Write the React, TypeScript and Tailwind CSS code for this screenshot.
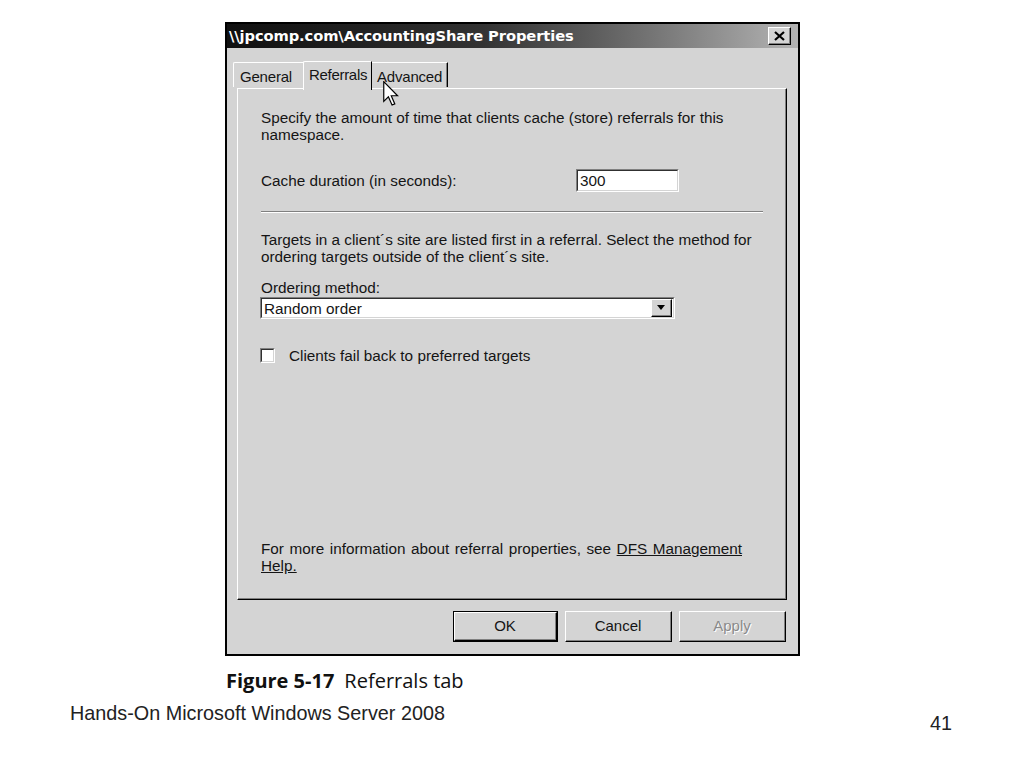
import React from "react";

function Raised({ className = "", children }: { className?: string; children?: React.ReactNode }) {
  return (
    <div className={"border-t border-l border-t-white border-l-white border-r border-b border-r-black border-b-black " + className}>
      <div className="w-full h-full border-r border-b border-r-[#808080] border-b-[#808080] flex items-center justify-center">
        {children}
      </div>
    </div>
  );
}

function Sunken({ className = "", children }: { className?: string; children?: React.ReactNode }) {
  return (
    <div className={"border-t border-l border-t-[#808080] border-l-[#808080] border-r border-b border-r-white border-b-white " + className}>
      <div className="w-full h-full border-t border-l border-t-[#303030] border-l-[#303030] border-r border-b border-r-[#d4d4d4] border-b-[#d4d4d4] bg-white flex items-center">
        {children}
      </div>
    </div>
  );
}

function Cursor() {
  return (
    <svg width="16" height="25" viewBox="0 0 12 19" className="absolute left-[156px] top-[57px]">
      <path d="M0.5 0.5 L0.5 15.5 L4 12 L6.8 18.3 L8.9 17.4 L6.2 11.2 L11 11.2 Z" fill="white" stroke="black" strokeWidth="0.9" strokeLinejoin="miter" />
    </svg>
  );
}

export default function App() {
  return (
    <div className="w-[1024px] h-[768px] bg-white overflow-hidden font-['Liberation_Sans',Arial,sans-serif] text-[#151515]">
      <div className="pl-[225px] pt-[22px]">
        <div className="relative w-[575px] h-[634px] border-2 border-black bg-[#d4d4d4] flex flex-col">
          {/* Title bar */}
          <div className="h-[24px] flex items-center justify-between bg-gradient-to-r from-[#101010] via-[#333333] via-45% to-[#b4b4b4] pl-[2px] pr-[7px]">
            <span className="text-white font-bold text-[14.7px] font-['DejaVu_Sans',Verdana,sans-serif] tracking-[-0.1px]">
              \\jpcomp.com\AccountingShare Properties
            </span>
            <Raised className="w-[23px] h-[18px] bg-[#d4d4d4]">
              <svg width="11" height="10" viewBox="0 0 11 10">
                <path d="M1 1 L10 9 M10 1 L1 9" stroke="black" strokeWidth="2.2" />
              </svg>
            </Raised>
          </div>

          {/* Tabs */}
          <div className="h-[40px] flex items-end pl-[6px] text-[15px]">
            <div className="relative h-[25px] w-[72px] border-t border-l border-t-white border-l-white rounded-tl-[2px] flex items-start pl-[6px] pt-[3px] mb-[1px] tracking-[-0.2px]">
              General
            </div>
            <div className="relative z-10 h-[29px] w-[69px] border-t border-l border-r border-t-white border-l-white border-r-black rounded-tl-[2px] bg-[#d4d4d4] flex items-start pl-[5px] pt-[2px] -mb-[2px] -ml-[2px] tracking-[-0.3px]">
              Referrals
            </div>
            <div className="relative h-[25px] w-[76px] border-t border-r border-t-white border-r-black flex items-start pl-[5px] pt-[3px] mb-[1px] tracking-[-0.2px]">
              <div className="absolute right-0 top-0 bottom-0 w-px bg-[#808080]" />
              Advanced
            </div>
          </div>

          {/* Panel */}
          <div className="ml-[10px] mr-[11px] h-[512px] border-t border-l border-t-white border-l-white border-r border-b border-r-black border-b-black">
            <div className="w-full h-full border-r border-b border-r-[#808080] border-b-[#808080] pl-[23px] pr-[22px] pt-[20px] pb-[24px] flex flex-col text-[15.3px] leading-[17px]">
              <p>Specify the amount of time that clients cache (store) referrals for this namespace.</p>
              <div className="flex items-center mt-[26px] h-[22px]">
                <span className="w-[315px]">Cache duration (in seconds):</span>
                <Sunken className="w-[103px] h-[23px]">
                  <span className="pl-[2px]">300</span>
                </Sunken>
              </div>
              <div className="mt-[20px] border-t border-t-[#808080] border-b border-b-white" />
              <p className="mt-[18px]">
                Targets in a client´s site are listed first in a referral. Select the method for ordering targets
                outside of the client´s site.
              </p>
              <p className="mt-[14px]">Ordering method:</p>
              <Sunken className="mt-[1px] w-[415px] h-[22px] -ml-[1px]">
                <span className="pl-[2px] flex-1">Random order</span>
                <Raised className="w-[21px] h-[18px] bg-[#d4d4d4] mr-[1px]">
                  <svg width="8" height="5" viewBox="0 0 8 5">
                    <path d="M0 0 L8 0 L4 5 Z" fill="black" />
                  </svg>
                </Raised>
              </Sunken>
              <div className="mt-[28px] flex items-center">
                <Sunken className="w-[15px] h-[15px] -ml-[1px]" />
                <span className="ml-[14px]">Clients fail back to preferred targets</span>
              </div>
              <div className="mt-auto w-[481px]">
                <p className="text-justify [text-align-last:justify]">
                  For more information about referral properties, see <span className="underline">DFS Management</span>
                </p>
                <p>
                  <span className="underline">Help.</span>
                </p>
              </div>
            </div>
          </div>

          {/* Buttons */}
          <div className="mt-[11px] flex justify-end gap-[7px] pr-[12px] text-[15px]">
            <div className="border border-black">
              <Raised className="w-[103px] h-[29px]">OK</Raised>
            </div>
            <Raised className="w-[107px] h-[31px]">Cancel</Raised>
            <Raised className="w-[107px] h-[31px]">
              <span className="text-[#8a8a8a] [text-shadow:1px_1px_0_#ffffff]">Apply</span>
            </Raised>
          </div>

          <Cursor />
        </div>
      </div>

      {/* Caption */}
      <div className="pl-[226px] mt-[11px] font-['Open_Sans','Noto_Sans',sans-serif] text-[20px] leading-[28px] text-[#111]">
        <span className="font-bold">Figure 5-17</span>
        <span className="ml-[10px]">Referrals tab</span>
      </div>

      {/* Footer */}
      <div className="flex items-start mt-[6px]">
        <span className="ml-[70px] text-[19.8px] leading-[24px] text-[#222]">Hands-On Microsoft Windows Server 2008</span>
        <span className="ml-auto mr-[72px] mt-[10px] text-[19.8px] leading-[24px] text-[#222]">41</span>
      </div>
    </div>
  );
}
